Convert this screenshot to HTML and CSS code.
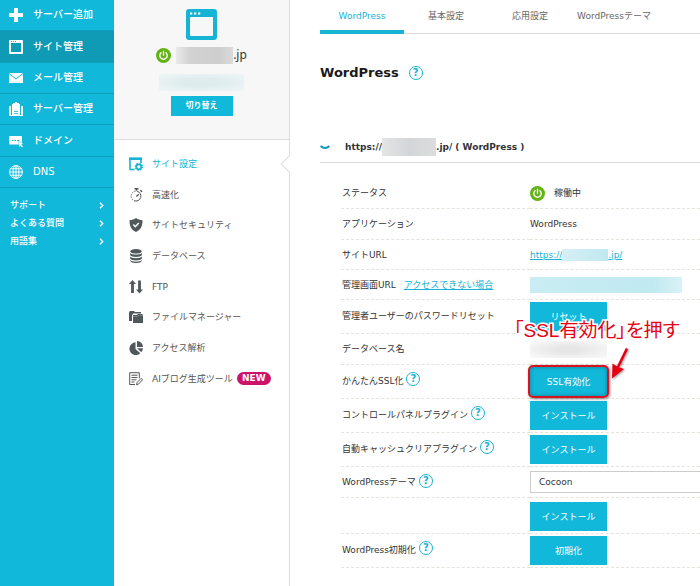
FILE: index.html
```html
<!DOCTYPE html>
<html lang="ja">
<head>
  <meta charset="UTF-8">
  <meta name="viewport" content="width=device-width, initial-scale=1.0">
  <title>WordPress - サイト設定</title>
  <link rel="stylesheet" href="styles.css">
</head>
<body>
  <aside class="sidebar">
    <nav class="global-nav">
      <a class="global-item" href="#">
        <svg class="icon" viewBox="0 0 14 14"><path d="M5 0h4v5h5v4H9v5H5V9H0V5h5z" fill="#fff"/></svg>
        サーバー追加
      </a>
      <a class="global-item active" href="#">
        <svg class="icon" viewBox="0 0 14 14"><path fill="#fff" fill-rule="evenodd" d="M1 0h12a1 1 0 0 1 1 1v12a1 1 0 0 1-1 1H1a1 1 0 0 1-1-1V1a1 1 0 0 1 1-1zm1 3v9h10V3zM2 1.300v.7h1v-.7zm2 0v.7h1v-.7zm2 0v.7h1v-.7z"/></svg>
        サイト管理
      </a>
      <a class="global-item" href="#">
        <svg class="icon" viewBox="0 0 14 14"><path d="M0 2h14v10H0z" fill="#fff"/><path d="M0 2.500l7 5.500 7-5.500" fill="none" stroke="#12b8da"/></svg>
        メール管理
      </a>
      <a class="global-item" href="#">
        <svg class="icon" viewBox="0 0 14 14"><path d="M0 4h2v9H0zM12 4h2v9h-2zM3 2h1V1h2V0h2v1h2v1h1v11H3z" fill="#fff"/><path d="M5 9.500h4M5 11.500h4" stroke="#12b8da" stroke-width=".8"/><path d="M2.500 4v9M11.500 4v9" stroke="#12b8da" stroke-width=".6"/><path d="M0 13.500h14" stroke="#fff"/></svg>
        サーバー管理
      </a>
      <a class="global-item" href="#">
        <svg class="icon" viewBox="0 0 14 14"><rect y="2" width="13" height="8.500" rx="1" fill="#fff"/><path d="M3 6.500h1.500M5.500 6.500H7M8 6.500h2.500" stroke="#12b8da"/><path d="M9.500 7.500l5 2-2 .9 1.700 1.900-1.300 1.300-1.800-1.900-.9 1.600z" fill="#fff" stroke="#12b8da" stroke-width=".4"/></svg>
        ドメイン
      </a>
      <a class="global-item" href="#">
        <svg class="icon" viewBox="0 0 14 14" fill="none" stroke="#fff"><circle cx="7" cy="7" r="6.400"/><ellipse cx="7" cy="7" rx="3" ry="6.400"/><path d="M7 .5v13M.5 7h13M1.500 3.800h11M1.500 10.200h11"/></svg>
        DNS
      </a>
    </nav>
    <nav class="support-nav">
      <a class="support-item" href="#">サポート
        <svg class="arrow" viewBox="0 0 5 7"><path d="M1 .8l2.700 2.700L1 6.200"/></svg>
      </a>
      <a class="support-item" href="#">よくある質問
        <svg class="arrow" viewBox="0 0 5 7"><path d="M1 .8l2.700 2.700L1 6.200"/></svg>
      </a>
      <a class="support-item" href="#">用語集
        <svg class="arrow" viewBox="0 0 5 7"><path d="M1 .8l2.700 2.700L1 6.200"/></svg>
      </a>
    </nav>
  </aside>

  <section class="site-column">
    <div class="site-card">
      <svg class="site-icon" viewBox="0 0 31 31"><path fill="#17b3d4" fill-rule="evenodd" d="M3 0h25a3 3 0 0 1 3 3v25a3 3 0 0 1-3 3H3a3 3 0 0 1-3-3V3a3 3 0 0 1 3-3zm1 8v18a1 1 0 0 0 1 1h21a1 1 0 0 0 1-1V8zM4 3.500v2h2.300v-2zm4 0v2h2.300v-2zm4 0v2h2.300v-2z"/></svg>
      <div class="site-host">
        <svg class="power" viewBox="0 0 15 15"><circle cx="7.500" cy="7.500" r="7.500" fill="#62b314"/><path d="M5 4.800a3.700 3.700 0 1 0 5 0M7.500 3.300v4" fill="none" stroke="#fff" stroke-width="1.400" stroke-linecap="round"/></svg>
        <span class="mask mask-host"></span>.jp
      </div>
      <span class="mask mask-server"></span>
      <button class="switch-button" type="button">切り替え</button>
    </div>

    <nav class="site-nav">
      <a class="site-item current" href="#">
        <svg class="icon" viewBox="0 0 14 14"><path d="M5.500 12.500H1V1.500h11V6" fill="none" stroke="#17b3d4" stroke-width="1.600"/><path d="M0 .5h13V3H0z" fill="#17b3d4"/><circle cx="9.800" cy="9.800" r="2.500" fill="none" stroke="#17b3d4" stroke-width="1.800"/><circle cx="9.800" cy="9.800" r="3.600" fill="none" stroke="#17b3d4" stroke-width="1.200" stroke-dasharray="1.400 1.430"/></svg>
        サイト設定
      </a>
      <a class="site-item" href="#">
        <svg class="icon" viewBox="0 0 14 14" fill="none" stroke="#555"><path d="M8 3.200a5 5 0 1 1-3 9.500"/><path d="M6.500 3.200a5 5 0 0 0-2 9.200" stroke-dasharray="1.300 1.200"/><path d="M5.500.7h4M7.500.7v2M11.300 2.200l1.800 1.600" stroke-width="1.500"/><path d="M7.300 8.500l2.500-2.300" stroke-width="1.300"/></svg>
        高速化
      </a>
      <a class="site-item" href="#">
        <svg class="icon" viewBox="0 0 14 14"><path d="M7 0c2 1.500 4 2 6.500 2.200C13.500 8 12 11.500 7 14 2 11.500.5 8 .5 2.200 3 2 5 1.500 7 0z" fill="#505859"/><path d="M4.300 6.500l2 2.200 3.500-3.700" fill="none" stroke="#fff" stroke-width="1.500"/></svg>
        サイトセキュリティ
      </a>
      <a class="site-item" href="#">
        <svg class="icon" viewBox="0 0 14 14" fill="#505859"><ellipse cx="7" cy="2.300" rx="5.800" ry="2.300"/><path d="M1.200 4c1.500 2 10 2 11.600 0v2.300c-1.500 2.300-10 2.300-11.600 0zM1.200 7.500c1.500 2.200 10 2.200 11.600 0v2.300c-1.500 2.300-10 2.300-11.600 0zM1.200 11c1.500 2.200 10 2.200 11.600 0v1c-1.500 2.700-10 2.700-11.600 0z"/></svg>
        データベース
      </a>
      <a class="site-item" href="#">
        <svg class="icon" viewBox="0 0 14 14"><path d="M3.500 0L7 4H4.900v9H2.100V4H0zM10.500 13.500L7 9.500h2.100V.5h2.800v9H14z" fill="#505859"/></svg>
        FTP
      </a>
      <a class="site-item" href="#">
        <svg class="icon" viewBox="0 0 14 14"><path d="M0 2.500L1 1h4l1 1h6v1.500H4.500L3 5v6H0z" fill="#505859"/><path d="M4 5h4l1-1h4l1 1v8H4z" fill="#505859"/><path d="M4 6.500h4.500l1-1H14" fill="none" stroke="#9ba0a0" stroke-width=".6"/></svg>
        ファイルマネージャー
      </a>
      <a class="site-item" href="#">
        <svg class="icon" viewBox="0 0 14 14" fill="#505859"><path d="M6.500 1.300V8l4.800 4.300A6.400 6.400 0 1 1 6.500 1.300z"/><path d="M8 0a6 6 0 0 1 6 6H8zM8 7.300h6a6 6 0 0 1-1.700 4z"/></svg>
        アクセス解析
      </a>
      <a class="site-item" href="#">
        <svg class="icon" viewBox="0 0 14 14" fill="none" stroke="#555"><path d="M6 12.500H.7V.7h9.600v5.500M2.500 3.200h6M2.500 5.500h6M2.500 7.800h5M2.500 10h3"/><path d="M7.500 12.800l.6-2.300 4-4.200 1.500 1.500-4 4.200z"/></svg>
        AIブログ生成ツール
        <span class="new-badge">NEW</span>
      </a>
    </nav>
  </section>

  <main class="content">
    <nav class="tabs">
      <a class="tab active" href="#">WordPress</a>
      <a class="tab" href="#">基本設定</a>
      <a class="tab" href="#">応用設定</a>
      <a class="tab" href="#">WordPressテーマ</a>
    </nav>

    <div class="page-title">
      <h1>WordPress</h1>
      <button class="help" type="button">?</button>
    </div>

    <h2 class="install-head">
      <svg class="chevron" viewBox="0 0 10 5"><path d="M.7 1C3 3.800 7 3.800 9.300 1" fill="none" stroke="#0f9bb8" stroke-width="2"/></svg>
      <span class="install-url">https://<span class="mask mask-url"></span>.jp/ ( WordPress )</span>
    </h2>

    <table class="settings">
      <tr>
        <th>ステータス</th>
        <td>
          <div class="status">
            <svg class="power" viewBox="0 0 15 15"><circle cx="7.500" cy="7.500" r="7.500" fill="#62b314"/><path d="M5 4.800a3.700 3.700 0 1 0 5 0M7.500 3.300v4" fill="none" stroke="#fff" stroke-width="1.400" stroke-linecap="round"/></svg>
            稼働中
          </div>
        </td>
      </tr>
      <tr>
        <th>アプリケーション</th>
        <td>WordPress</td>
      </tr>
      <tr class="link-row">
        <th>サイトURL</th>
        <td><a class="site-link" href="#">https://<span class="mask mask-link"></span>.jp/</a></td>
      </tr>
      <tr class="link-row">
        <th>管理画面URL <a class="trouble-link" href="#">アクセスできない場合</a></th>
        <td><span class="mask mask-admin"></span></td>
      </tr>
      <tr class="button-row">
        <th>管理者ユーザーのパスワードリセット</th>
        <td><button class="action" type="button">リセット</button></td>
      </tr>
      <tr>
        <th>データベース名</th>
        <td><span class="mask mask-db"></span></td>
      </tr>
      <tr class="button-row">
        <th>かんたんSSL化<button class="help" type="button">?</button></th>
        <td class="ssl-cell">
          <button class="action" type="button">SSL有効化</button>
          <div class="ssl-frame"></div>
          <div class="ssl-note">「SSL有効化」を押す</div>
          <svg class="ssl-arrow" viewBox="0 0 20 34"><path d="M17 1.500L7.500 21" stroke="#e60012" stroke-width="2.600"/><path d="M2 31.500l.5-15 5.500 3.500 6 2z" fill="#e60012"/></svg>
        </td>
      </tr>
      <tr class="button-row">
        <th>コントロールパネルプラグイン<button class="help" type="button">?</button></th>
        <td><button class="action" type="button">インストール</button></td>
      </tr>
      <tr class="button-row">
        <th>自動キャッシュクリアプラグイン<button class="help" type="button">?</button></th>
        <td><button class="action" type="button">インストール</button></td>
      </tr>
      <tr>
        <th><label for="theme">WordPressテーマ</label><button class="help" type="button">?</button></th>
        <td>
          <select class="theme-select" id="theme">
            <option>Cocoon</option>
          </select>
        </td>
      </tr>
      <tr class="install-row">
        <th></th>
        <td><button class="action" type="button">インストール</button></td>
      </tr>
      <tr class="button-row">
        <th>WordPress初期化<button class="help" type="button">?</button></th>
        <td><button class="action" type="button">初期化</button></td>
      </tr>
    </table>
  </main>
</body>
</html>
```

FILE: styles.css
```css
* {
  box-sizing: border-box;
}

body {
  display: flex;
  min-height: 100vh;
  margin: 0;
  background: #fff;
  color: #333;
  font-family: "DejaVu Sans", "Noto Sans CJK JP", sans-serif;
  font-size: 9px;
  line-height: 14px;
}

a {
  color: inherit;
  text-decoration: none;
}

button {
  padding: 0;
  border: none;
  font-family: inherit;
  line-height: 14px;
  cursor: pointer;
}

.icon {
  flex: none;
  width: 14px;
  height: 14px;
}

/* left sidebar */
.sidebar {
  flex: none;
  width: 114px;
  background: #12b8da;
  color: #fff;
}

.global-item {
  display: flex;
  align-items: center;
  gap: 10px;
  height: 31px;
  padding-left: 9px;
  border-bottom: 1px solid #109fbd;
  font-size: 10px;
  font-weight: 500;
}

.global-item:nth-child(3n+2) {
  height: 32px;
}

.global-item.active {
  background: #0f9ab6;
}

.support-nav {
  padding: 8px 10px;
}

.support-item {
  display: flex;
  align-items: center;
  justify-content: space-between;
  height: 18px;
  font-weight: 500;
}

.arrow {
  width: 5px;
  height: 7px;
  fill: none;
  stroke: #fff;
  stroke-width: 1.4;
}

/* site column */
.site-column {
  flex: none;
  width: 176px;
  border-right: 1px solid #ddd;
}

.site-card {
  display: flex;
  flex-direction: column;
  align-items: center;
  height: 140px;
  padding-top: 9px;
  background: #f7f7f7;
  border-bottom: 1px solid #ddd;
}

.site-icon {
  width: 31px;
  height: 31px;
}

.site-host {
  display: flex;
  align-items: center;
  height: 18px;
  margin-top: 6px;
  font-family: "Noto Sans", sans-serif;
  font-size: 12px;
}

.power {
  flex: none;
  width: 15px;
  height: 15px;
}

.mask {
  display: inline-block;
  flex: none;
  vertical-align: middle;
}

.mask-host {
  width: 57px;
  height: 17px;
  margin-left: 5px;
  background: linear-gradient(90deg, #e9e9e9, #d2d2d2 25%, #cecece 75%, #dadada);
}

.mask-server {
  width: 85px;
  height: 17px;
  margin-top: 10px;
  background: radial-gradient(ellipse at center, #deecee 30%, #f0f5f6 100%);
}

.switch-button {
  width: 62px;
  height: 20px;
  margin-top: 5px;
  background: #12b8da;
  color: #fff;
  font-size: 8px;
  font-weight: bold;
}

.site-nav {
  padding-top: 8px;
}

.site-item {
  display: flex;
  position: relative;
  align-items: center;
  height: 31px;
  padding-left: 15px;
  color: #555;
}

.site-item:nth-child(3n) {
  height: 30px;
}

.site-item .icon {
  margin-right: 9px;
}

.site-item.current {
  color: #17b3d4;
}

/* notch on the column border */
.site-item.current::after {
  content: "";
  position: absolute;
  top: 10px;
  right: -6px;
  width: 11px;
  height: 11px;
  background: #fff;
  border-left: 1px solid #ddd;
  border-bottom: 1px solid #ddd;
  transform: rotate(45deg);
}

.new-badge {
  width: 34px;
  height: 13px;
  margin-left: 4px;
  border-radius: 7px;
  background: #cc1368;
  color: #fff;
  font-weight: bold;
  line-height: 13px;
  text-align: center;
}

/* main */
.content {
  flex: 1;
  min-width: 0;
  padding-left: 30px;
}

.tabs {
  display: flex;
  height: 34px;
  border-bottom: 1px solid #ddd;
}

.tab {
  flex: none;
  width: 84px;
  height: 34px;
  padding-top: 9px;
  color: #666;
  text-align: center;
}

.tab.active {
  border-bottom: 4px solid #17b3d4;
  color: #17b3d4;
}

.page-title {
  display: flex;
  align-items: center;
  gap: 10px;
  margin-top: 29px;
}

h1 {
  margin: 0;
  color: #1a1a1a;
  font-size: 13px;
  line-height: 20px;
}

.help {
  width: 14px;
  height: 14px;
  border: 1px solid #17b3d4;
  border-radius: 50%;
  background: #fff;
  color: #17b3d4;
  font-size: 10px;
  font-weight: bold;
  line-height: 12px;
  vertical-align: middle;
}

.install-head {
  display: flex;
  align-items: center;
  gap: 15px;
  height: 31px;
  margin: 49px 0 0;
  border-bottom: 1px solid #ddd;
  font-size: 9px;
}

.chevron {
  flex: none;
  width: 10px;
  height: 5px;
}

.install-url {
  display: flex;
  align-items: center;
  white-space: pre;
}

.mask-url {
  width: 54px;
  height: 18px;
  background: linear-gradient(90deg, #e4e4e4, #d3d6d8 50%, #dcdcdc);
}

.settings {
  width: calc(100% - 21px);
  margin: 15px 0 0 21px;
  border-spacing: 0;
  table-layout: fixed;
}

.settings th,
.settings td {
  height: 31px;
  padding: 0;
  border-bottom: 1px dashed #e4e4dc;
  font-weight: normal;
  text-align: left;
  vertical-align: middle;
}

.settings th {
  width: 189px;
  padding-left: 1px;
  white-space: nowrap;
}

.settings th .help {
  margin: -4px 0 0 3px;
}

.settings .link-row th,
.settings .link-row td {
  height: 30px;
}

.settings .button-row th,
.settings .button-row td {
  height: 34px;
}

.settings .button-row th {
  padding-bottom: 2px;
}

.settings .install-row td {
  height: 36px;
  padding-top: 2px;
}

.status {
  display: flex;
  align-items: center;
  gap: 9px;
}

.site-link,
.trouble-link {
  color: #17b3d4;
  text-decoration: underline;
}

.trouble-link {
  margin-left: 5px;
}

.mask-link {
  width: 46px;
  height: 12px;
  background: linear-gradient(90deg, #d6f0f5, #c0e8f0);
}

.mask-admin {
  width: 152px;
  height: 16px;
  background: linear-gradient(90deg, #c9edf3, #c0e9f1 80%, #d8f2f6);
}

.mask-db {
  width: 77px;
  height: 17px;
  background: radial-gradient(ellipse at center, #e6e6e6 20%, #f8f8f8 90%);
}

.action {
  display: block;
  width: 77px;
  height: 29px;
  background: #12b8da;
  color: #fff;
  font-size: 9px;
}

.theme-select {
  display: block;
  width: 100%;
  height: 22px;
  padding: 0 8px;
  border: 1px solid #ccc;
  border-right: none;
  border-radius: 0;
  background: #fff;
  color: #333;
  font-family: inherit;
  font-size: 9px;
  appearance: none;
}

/* callout on the SSL button */
.ssl-cell {
  position: relative;
}

.ssl-frame {
  position: absolute;
  top: 0;
  left: -2px;
  width: 81px;
  height: 33px;
  border: 2px solid #d9121f;
  border-radius: 5px;
  box-shadow: 1px 1px 3px rgba(0,0,0,0.5), inset 0 0 4px rgba(0,0,0,0.3);
  pointer-events: none;
}

.ssl-note {
  position: absolute;
  top: -46px;
  left: -16px;
  color: #e60012;
  font-family: "Liberation Sans", "Noto Sans CJK JP", sans-serif;
  font-size: 19px;
  font-feature-settings: "palt";
  line-height: 24px;
  white-space: nowrap;
  -webkit-text-stroke: 3px #fff;
  paint-order: stroke fill;
}

.ssl-arrow {
  position: absolute;
  top: -18px;
  left: 80px;
  width: 20px;
  height: 34px;
  filter: drop-shadow(1px 1px 1px rgba(0,0,0,0.4));
}
```
